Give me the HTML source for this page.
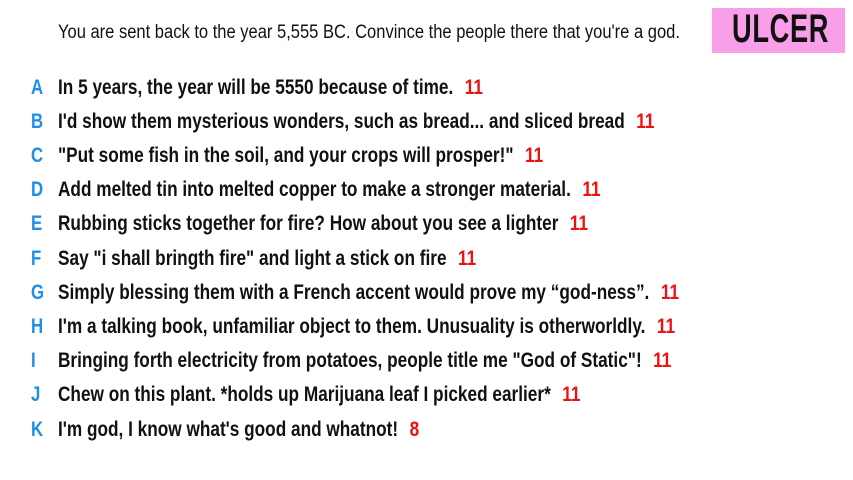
<!DOCTYPE html>
<html><head><meta charset="utf-8"><style>
body{margin:0;width:853px;height:480px;background:#fff;overflow:hidden;font-family:"Liberation Sans",sans-serif;position:relative}
.h{position:absolute;left:58px;top:22px;font-size:19px;color:#111;white-space:nowrap;transform:scaleX(0.87);transform-origin:left}
.u{position:absolute;left:712px;top:8px;width:133px;height:45px;background:#f99ee8;}
.u span{position:absolute;left:20px;top:-1px;font-size:40px;font-weight:bold;color:#111;transform:scaleX(0.68);transform-origin:left;letter-spacing:1px}
.r{position:absolute;left:0;height:30px;white-space:nowrap;font-size:21px;font-weight:bold;color:#111}
.r b{position:absolute;left:31px;color:#1e8fe8;transform:scaleX(0.8);transform-origin:left}
.r .t{position:absolute;left:58px;transform:scaleX(0.82);transform-origin:left}
.r i{font-style:normal;color:#ee1111;margin-left:14px}
</style></head><body>
<div class="h">You are sent back to the year 5,555 BC. Convince the people there that you're a god.</div>
<div class="u"><span>ULCER</span></div>
<div class="r" style="top:76px"><b>A</b><span class="t">In 5 years, the year will be 5550 because of time.<i>11</i></span></div>
<div class="r" style="top:110px"><b>B</b><span class="t">I'd show them mysterious wonders, such as bread... and sliced bread<i>11</i></span></div>
<div class="r" style="top:144px"><b>C</b><span class="t">"Put some fish in the soil, and your crops will prosper!"<i>11</i></span></div>
<div class="r" style="top:178px"><b>D</b><span class="t">Add melted tin into melted copper to make a stronger material.<i>11</i></span></div>
<div class="r" style="top:212px"><b>E</b><span class="t">Rubbing sticks together for fire? How about you see a lighter<i>11</i></span></div>
<div class="r" style="top:247px"><b>F</b><span class="t">Say "i shall bringth fire" and light a stick on fire<i>11</i></span></div>
<div class="r" style="top:281px"><b>G</b><span class="t">Simply blessing them with a French accent would prove my “god-ness”.<i>11</i></span></div>
<div class="r" style="top:315px"><b>H</b><span class="t">I'm a talking book, unfamiliar object to them. Unusuality is otherworldly.<i>11</i></span></div>
<div class="r" style="top:349px"><b>I</b><span class="t">Bringing forth electricity from potatoes, people title me "God of Static"!<i>11</i></span></div>
<div class="r" style="top:383px"><b>J</b><span class="t">Chew on this plant. *holds up Marijuana leaf I picked earlier*<i>11</i></span></div>
<div class="r" style="top:418px"><b>K</b><span class="t">I'm god, I know what's good and whatnot!<i>8</i></span></div>
</body></html>
